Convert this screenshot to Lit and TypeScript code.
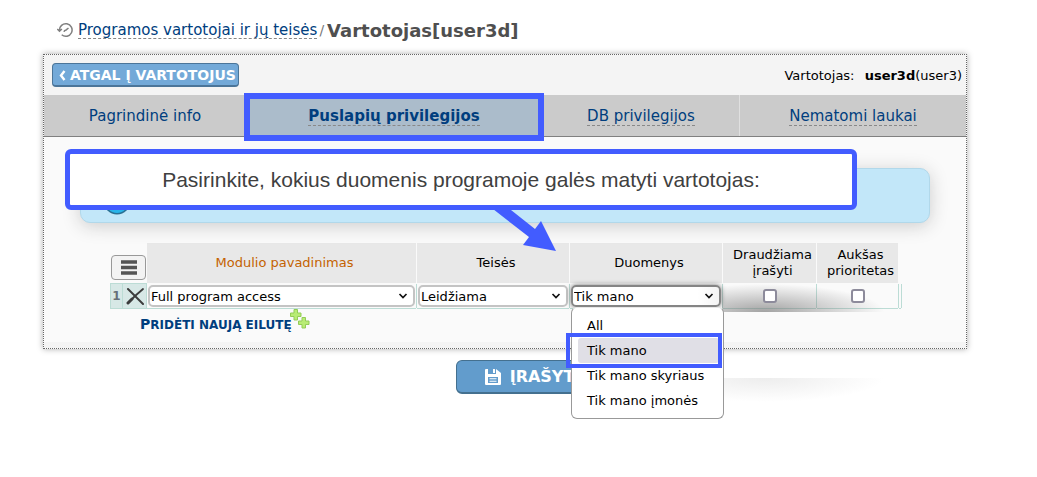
import { LitElement, html, css, svg } from "lit";
import { customElement, property } from "lit/decorators.js";

const chevron = html`<svg class="chevron" viewBox="0 0 10 6" aria-hidden="true">
  <path d="M1.5 1 5 4.5 8.5 1" fill="none" stroke="#111" stroke-width="1.7" />
</svg>`;

@customElement("select-field")
class SelectField extends LitElement {
  @property() label = "";
  @property() value = "";
  @property({ type: Boolean }) open = false;
  @property({ attribute: false }) options: string[] = [];

  static styles = css`
    :host { display: block; }
    .field { display: grid; align-items: center; }
    select, .chevron { grid-area: 1 / 1; }
    select {
      appearance: none;
      width: 100%;
      height: 22px;
      box-sizing: border-box;
      margin: 0;
      padding: 0 20px 0 1px;
      border: 2px solid #c4c4c4;
      border-radius: 5px;
      background: #fff;
      color: #000;
      font: 13px "DejaVu Sans", Verdana, sans-serif;
    }
    .open {
      border-color: #858585;
      background: linear-gradient(90deg, #fff 85%, #f4f4f4);
      box-shadow: 0 0 5px #777;
    }
    .chevron {
      justify-self: end;
      width: 10px;
      height: 6px;
      margin-right: 7px;
      pointer-events: none;
    }
  `;

  render() {
    const list = this.options.length ? this.options : [this.value];
    return html`<div class="field">
      <select class=${this.open ? "open" : ""} aria-label=${this.label}>
        ${list.map((o) => html`<option ?selected=${o === this.value}>${o}</option>`)}
      </select>
      ${chevron}
    </div>`;
  }
}

const scopes = ["All", "Tik mano", "Tik mano skyriaus", "Tik mano įmonės"];

const plus = (x: number, y: number) => svg`<path transform="translate(${x} ${y})"
  d="M4 .5h3.500V4H11v3.500H7.500V11H4V7.500H.5V4H4z" fill="#b8ec74" stroke="#93cc57" />`;

@customElement("app-root")
class AppRoot extends LitElement {
  static styles = css`
    :host {
      display: block;
      min-height: 100vh;
      box-sizing: border-box;
      padding: 18px 0 0;
      background: #fff;
      color: #000;
      font: 13px/16px "DejaVu Sans", Verdana, sans-serif;
    }
    a { color: #003e7e; text-decoration: none; }
    .crumbs {
      display: flex;
      align-items: center;
      height: 24px;
      padding-left: 57px;
      color: #777;
      font-size: 14px;
    }
    .crumbs a { border-bottom: 1px dashed #888; margin: 0 2px 0 5px; font-size: 15px; }
    .history { width: 16px; height: 16px; }
    h1 { margin: 0 0 0 3px; padding-top: 1px; color: #4f4f4f; font-size: 18px; line-height: 24px; }
    .panel {
      margin: 12px 70px 0 43px;
      border: 1px dotted #666;
      background: #fafafa;
      box-shadow: 0 0 6px #aaa;
    }
    .toolbar {
      display: flex;
      justify-content: space-between;
      align-items: center;
      height: 40px;
      padding: 0 4px 0 8px;
      background: #f4f4f4;
    }
    .back {
      display: flex;
      align-items: center;
      gap: 4px;
      height: 24px;
      padding: 1px 2px 0 6px;
      border: 1px solid #4b7599;
      border-bottom-width: 2px;
      border-radius: 4px;
      background: #73a9d8;
      color: #fff;
      font: bold 14px "DejaVu Sans", Verdana, sans-serif;
    }
    .back svg { width: 7px; height: 11px; }
    .user { padding-top: 1px; }
    .user b { margin-left: 6px; }
    .tabs {
      display: grid;
      grid-template-columns: 202fr 296fr 197fr 227fr;
      height: 41px;
      border-bottom: 1px solid #808080;
      background: #cbcbcb;
      font-size: 15px;
      line-height: 18px;
    }
    .tab { display: flex; align-items: center; justify-content: center; padding-top: 2px; }
    .tab + .tab { border-left: 1px solid #e0e0e0; }
    .tab span { border-bottom: 1px dashed #888; }
    .tab .plain { border-color: transparent; }
    .tab.active {
      position: relative;
      border: 0;
      background: #abbccb;
      font-weight: bold;
    }
    .active::after {
      content: "";
      position: absolute;
      inset: -2px -2px -5px;
      border: 6px solid #425cff;
    }
    .body { padding: 31px 36px 3px; }
    .info {
      position: relative;
      display: flex;
      align-items: end;
      height: 53px;
      padding: 0 22px;
      border: 1px solid #b1d8ea;
      border-radius: 10px;
      background: #c2e7f9;
      box-shadow: 0 3px 18px #ccc;
    }
    .orb { width: 28px; height: 28px; margin-bottom: 7px; }
    .callout {
      position: absolute;
      inset: -20px 72px auto -16px;
      display: flex;
      align-items: center;
      justify-content: center;
      box-sizing: border-box;
      height: 61px;
      border: 5px solid #425cff;
      border-radius: 6px;
      background: #fff;
      color: #404040;
      font: 21px "Liberation Sans", Arial, sans-serif;
    }
    .arrow { position: absolute; left: 412px; top: 40px; width: 64px; height: 44px; }
    .grid {
      width: 792px;
      max-width: 100%;
      margin: 19px 0 0 30px;
      border-spacing: 1px;
      table-layout: fixed;
    }
    th { height: 40px; padding: 0 0 0 6px; background: #e8e8e8; font-weight: normal; }
    th.sorted { color: #c46200; }
    th.corner, th.edge { padding: 0; background: none; vertical-align: bottom; }
    td { height: 24px; padding: 0 1px; text-align: center; box-shadow: 0 1px #bcdcd5, 1px 0 #bcdcd5; }
    td.mark { padding: 0; background: #d7e8e6; box-shadow: 0 0 0 1px #bcdcd5; color: #667078; }
    td.num { font-size: 12px; font-weight: bold; }
    .c-num { width: 11px; }
    .c-del { width: 23px; }
    .c-name { width: 269px; }
    .c-sel { width: 152px; }
    .c-ban { width: 93px; }
    .c-pri { width: 81px; }
    .menu {
      display: grid;
      place-items: center;
      width: 35px;
      height: 25px;
      margin: 0 0 3px auto;
      padding: 0;
      border: 1px solid #999;
      border-radius: 4px;
      background: #f3f3f3;
    }
    .menu svg { width: 16px; height: 15px; }
    .del { display: block; margin: auto; padding: 0; border: 0; background: none; height: 18px; }
    .del svg { width: 18px; height: 18px; }
    .checks input {
      appearance: none;
      position: relative;
      z-index: 1;
      display: block;
      box-sizing: border-box;
      width: 14px;
      height: 14px;
      margin: auto;
      border: 2px solid #8d8b9b;
      border-radius: 3px;
      background: #fff;
    }
    .picker { position: relative; }
    .picker::before, .picker::after {
      content: "";
      position: absolute;
      left: 100%;
      width: 170px;
      pointer-events: none;
    }
    .picker::before {
      top: 0;
      height: 28px;
      background: radial-gradient(ellipse 120px 28px at 25% 100%, #777a, #7770);
    }
    .picker::after {
      top: 94px;
      height: 24px;
      background: radial-gradient(ellipse 120px 24px at 25% 0, #7772, #7770);
    }
    .list {
      position: absolute;
      z-index: 2;
      left: 1px;
      top: 23px;
      box-sizing: border-box;
      width: 153px;
      margin: 0;
      padding: 5px 4px 5px 6px;
      border: 1px solid #999;
      border-top-color: #e8e8e8;
      border-radius: 6px;
      background: #fff;
      list-style: none;
      text-align: left;
      white-space: nowrap;
    }
    .list li { height: 25px; padding-left: 9px; line-height: 25px; border-radius: 3px; }
    .list .chosen { position: relative; background: #e0dfe6; }
    .chosen::after {
      content: "";
      position: absolute;
      inset: -5px -3px -5px -12px;
      border: 4px solid #425cff;
    }
    .add {
      display: flex;
      align-items: center;
      height: 30px;
      margin-left: 60px;
      font-size: 12px;
      font-weight: bold;
      text-transform: uppercase;
    }
    .add span { display: block; }
    .add span::first-letter { font-size: 14px; }
    .add svg { width: 20px; height: 20px; margin: 0 0 10px -2px; }
    .foot { height: 6px; background: #f4f4f4; }
    .actions { display: flex; justify-content: center; padding: 11px 0 0 27px; }
    .save {
      display: flex;
      align-items: center;
      gap: 8px;
      height: 34px;
      padding: 0 27px;
      border: 1px solid #44708f;
      border-bottom-width: 2px;
      border-radius: 6px;
      background: #629ccc;
      color: #fff;
      font: bold 16px "DejaVu Sans", Verdana, sans-serif;
    }
    .save svg { width: 18px; height: 18px; }
  `;

  render() {
    return html`
      <nav class="crumbs">
        <svg class="history" viewBox="0 0 16 16" fill="none" stroke="#808080" stroke-width="1.500">
          <path d="M2.500 8.500a6.300 6.300 0 1 1 2.200 4.300M.3 7l2.200 2.200L4.900 7M7 9.800q.3-1.600 1.800-1.600L11.500 6" />
        </svg>
        <a href="#">Programos vartotojai ir jų teisės</a>/
        <h1>Vartotojas[user3d]</h1>
      </nav>
      <main class="panel">
        <div class="toolbar">
          <button class="back">
            <svg viewBox="0 0 7 11"><path d="M5.500 1 2 5.500 5.500 10" fill="none" stroke="#fff" stroke-width="2.400" /></svg>
            ATGAL Į VARTOTOJUS
          </button>
          <div class="user">Vartotojas: <b>user3d</b>(user3)</div>
        </div>
        <nav class="tabs">
          <a class="tab" href="#"><span class="plain">Pagrindinė info</span></a>
          <a class="tab active" href="#"><span>Puslapių privilegijos</span></a>
          <a class="tab" href="#"><span>DB privilegijos</span></a>
          <a class="tab" href="#"><span>Nematomi laukai</span></a>
        </nav>
        <div class="body">
          <div class="info">
            <svg class="orb" viewBox="0 0 28 28">
              <circle cx="14" cy="14" r="13.500" fill="#2a6f93" />
              <ellipse cx="14" cy="13" rx="12" ry="13" fill="#29b4e8" />
            </svg>
            <svg class="arrow" viewBox="0 0 64 44">
              <path d="M0 0 18 1 42 20 48 12 63 42 30 36 36 28z" fill="#425cff" />
            </svg>
            <div class="callout">Pasirinkite, kokius duomenis programoje galės matyti vartotojas:</div>
          </div>
          <table class="grid">
            <colgroup>
              <col class="c-num" /><col class="c-del" /><col class="c-name" />
              <col class="c-sel" /><col class="c-sel" /><col class="c-ban" />
              <col class="c-pri" /><col />
            </colgroup>
            <thead>
              <tr>
                <th class="corner" colspan="2">
                  <button class="menu" aria-label="Meniu">
                    <svg viewBox="0 0 16 15"><path d="M0 2h16M0 7.500h16M0 13h16" stroke="#555" stroke-width="3.400" /></svg>
                  </button>
                </th>
                <th class="sorted">Modulio pavadinimas</th>
                <th>Teisės</th>
                <th>Duomenys</th>
                <th>Draudžiama<br />įrašyti</th>
                <th>Aukšas<br />prioritetas</th>
                <th class="edge"></th>
              </tr>
            </thead>
            <tbody>
              <tr>
                <td class="mark num">1</td>
                <td class="mark">
                  <button class="del" aria-label="Pašalinti">
                    <svg viewBox="0 0 18 18" fill="none" stroke="#3c3c3c" stroke-linecap="round">
                      <path d="M2 2 8 8l9 9" stroke-width="2" /><path d="M17 2 9 9l-7 7" stroke-width="1.800" />
                      <path d="m2 16 4-4" stroke-width="3" />
                    </svg>
                  </button>
                </td>
                <td><select-field label="Modulio pavadinimas" value="Full program access"></select-field></td>
                <td><select-field label="Teisės" value="Leidžiama"></select-field></td>
                <td class="picker">
                  <select-field open label="Duomenys" value="Tik mano" .options=${scopes}></select-field>
                  <ul class="list">
                    ${scopes.map((s) => html`<li class=${s === "Tik mano" ? "chosen" : ""}>${s}</li>`)}
                  </ul>
                </td>
                <td class="checks"><input type="checkbox" aria-label="Draudžiama įrašyti" /></td>
                <td class="checks"><input type="checkbox" aria-label="Aukšas prioritetas" /></td>
                <td></td>
              </tr>
            </tbody>
          </table>
          <a class="add" href="#"><span>Pridėti naują eilutę</span>
            <svg viewBox="0 0 20 20">${plus(0, 0)}${plus(8, 8)}</svg>
          </a>
        </div>
        <div class="foot"></div>
      </main>
      <div class="actions">
        <button class="save">
          <svg viewBox="0 0 18 18"><path fill="#fff" fill-rule="evenodd" d="M2 1h2v5h8V1l5 4v11q0 1-1 1H2q-1 0-1-1V2q0-1 1-1zM9 1h2v4H9zM4 9v6h10V9zM5.500 10.300h7v1h-7zm0 2.400h7v1h-7z" /></svg>
          ĮRAŠYTI
        </button>
      </div>
    `;
  }
}
